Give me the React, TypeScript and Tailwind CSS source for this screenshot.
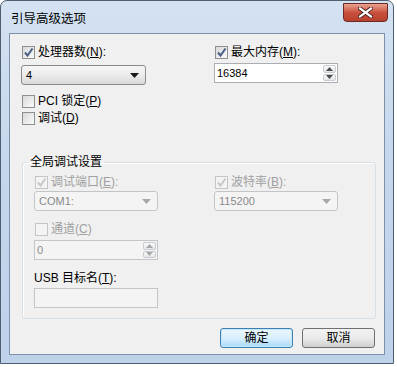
import React from "react";

function Check({ checked, disabled }: { checked?: boolean; disabled?: boolean }) {
  return (
    <span
      className={`flex h-[13px] w-[13px] shrink-0 items-center justify-center border ${
        disabled ? "border-[#c3c6c9] bg-[#f4f4f4]" : "border-[#8e8f8f] bg-gradient-to-br from-[#d8d8d8] to-[#fbfbfb]"
      }`}
    >
      {checked && (
        <svg width="11" height="11" viewBox="0 0 11 11">
          <path
            d="M2 5.5 L4.5 8.5 L9.5 1.5"
            fill="none"
            stroke={disabled ? "#c8c8c8" : "#4a5f85"}
            strokeWidth="2"
          />
        </svg>
      )}
    </span>
  );
}

function CheckRow({
  checked,
  disabled,
  children,
}: {
  checked?: boolean;
  disabled?: boolean;
  children: React.ReactNode;
}) {
  return (
    <div className={`flex h-[13px] items-center gap-[3px] pl-[1px] ${disabled ? "text-[#a0a0a0]" : "text-black"}`}>
      <Check checked={checked} disabled={disabled} />
      <span className="leading-[13px] whitespace-nowrap">{children}</span>
    </div>
  );
}

function Combo({ value, disabled, width }: { value: string; disabled?: boolean; width: string }) {
  return (
    <div
      className={`flex h-[20px] ${width} items-center justify-between rounded-[3px] border pl-[4px] pr-[6px] text-[11px] ${
        disabled
          ? "border-[#c3c6c9] bg-[#f4f4f4] text-[#8a8a8a]"
          : "border-[#8b8b8b] bg-gradient-to-b from-[#f6f6f6] via-[#ececec] to-[#d9d9d9] text-black"
      }`}
    >
      <span>{value}</span>
      <svg width="9" height="5" viewBox="0 0 9 5">
        <path d="M0 0 H9 L4.5 5 Z" fill={disabled ? "#a8a8a8" : "#1a1a1a"} />
      </svg>
    </div>
  );
}

function Spin({ value, disabled }: { value: string; disabled?: boolean }) {
  const arrow = disabled ? "#a8a8a8" : "#4d4d4d";
  return (
    <div
      className={`flex h-[20px] w-[124px] items-stretch border ${
        disabled ? "border-[#c3c6c9] bg-[#f4f4f4] text-[#8a8a8a]" : "border-[#abadb3] bg-white text-black"
      }`}
    >
      <span className="flex flex-1 items-center pl-[2px] text-[11px]">{value}</span>
      <div className="flex w-[15px] flex-col gap-[1px] p-[1px]">
        <div className="flex flex-1 items-center justify-center rounded-[2px] border border-[#c8ccd2] bg-gradient-to-b from-[#fafafa] to-[#e4e6e9]">
          <svg width="7" height="4" viewBox="0 0 7 4">
            <path d="M0 4 L3.5 0 L7 4 Z" fill={arrow} />
          </svg>
        </div>
        <div className="flex flex-1 items-center justify-center rounded-[2px] border border-[#c8ccd2] bg-gradient-to-b from-[#fafafa] to-[#e4e6e9]">
          <svg width="7" height="4" viewBox="0 0 7 4">
            <path d="M0 0 L7 0 L3.5 4 Z" fill={arrow} />
          </svg>
        </div>
      </div>
    </div>
  );
}

export default function App() {
  return (
    <div className="h-[367px] w-[397px] overflow-hidden bg-white font-['Liberation_Sans','Noto_Sans_CJK_SC',sans-serif] text-[12px]">
      <div className="flex h-[364px] w-[394px] flex-col rounded-t-[7px] border border-[#4f5d6e] bg-gradient-to-b from-[#d4e2f2] via-[#c3d6ec] to-[#bed2ea]">
        {/* Title bar */}
        <div className="flex h-[32px] shrink-0 items-start pl-[10px] pr-[5px]">
          <span className="pt-[11px] text-[12.5px] leading-[14px] text-black">引导高级选项</span>
          <div className="ml-auto mt-[2px] flex h-[19px] w-[45px] items-center justify-center rounded-b-[4px] border border-[#6b2a23] bg-gradient-to-b from-[#e8a291] via-[#c9503d] to-[#b8412e]">
            <svg width="15" height="11" viewBox="0 0 15 11">
              <path d="M2 1.5 L13 9.5 M13 1.5 L2 9.5" stroke="#3a1a14" strokeWidth="4" strokeLinecap="square" />
              <path d="M2 1.5 L13 9.5 M13 1.5 L2 9.5" stroke="#ffffff" strokeWidth="2.2" strokeLinecap="square" />
            </svg>
          </div>
        </div>

        {/* Client area */}
        <div className="mx-[8px] h-[322px] border border-[#7d91aa] bg-[#f0f0f0] pl-[11px] pr-[9px] pt-[12px]">
          <div className="grid grid-cols-[193px_1fr]">
            <div className="flex flex-col">
              <CheckRow checked>
                处理器数(<u>N</u>):
              </CheckRow>
              <div className="mt-[6px]">
                <Combo value="4" width="w-[125px]" />
              </div>
              <div className="mt-[10px]">
                <CheckRow>
                  PCI 锁定(<u>P</u>)
                </CheckRow>
              </div>
              <div className="mt-[4px]">
                <CheckRow>
                  调试(<u>D</u>)
                </CheckRow>
              </div>
            </div>
            <div className="flex flex-col">
              <CheckRow checked>
                最大内存(<u>M</u>):
              </CheckRow>
              <div className="mt-[4px]">
                <Spin value="16384" />
              </div>
            </div>
          </div>

          {/* Group box */}
          <fieldset className="ml-[1px] mt-[30px] h-[164px] w-[354px] rounded-[3px] border border-[#d5dfe5] px-[11px] shadow-[inset_1px_1px_0_#ffffff]">
            <legend className="-ml-[6px] px-[2px] text-[12px] leading-[14px] text-black">全局调试设置</legend>
            <div className="mt-[7px] grid grid-cols-[180px_1fr]">
              <div className="flex flex-col">
                <CheckRow checked disabled>
                  调试端口(<u>E</u>):
                </CheckRow>
                <div className="mt-[2px]">
                  <Combo value="COM1:" disabled width="w-[124px]" />
                </div>
                <div className="mt-[12px]">
                  <CheckRow disabled>
                    通道(<u>C</u>)
                  </CheckRow>
                </div>
                <div className="mt-[4px]">
                  <Spin value="0" disabled />
                </div>
                <div className="mt-[11px] h-[14px] leading-[14px] text-black">
                  USB 目标名(<u>T</u>):
                </div>
                <div className="mt-[3px] h-[20px] w-[124px] border border-[#c3c6c9] bg-[#f4f4f4]" />
              </div>
              <div className="flex flex-col">
                <CheckRow checked disabled>
                  波特率(<u>B</u>):
                </CheckRow>
                <div className="mt-[2px]">
                  <Combo value="115200" disabled width="w-[124px]" />
                </div>
              </div>
            </div>
          </fieldset>

          {/* Buttons */}
          <div className="mt-[9px] flex justify-end gap-[9px]">
            <div className="flex h-[20px] w-[73px] items-center justify-center rounded-[3px] border border-[#3c7fb1] bg-gradient-to-b from-[#eaf6fd] via-[#d9f0fc] to-[#a7d9f5] shadow-[inset_0_0_0_1px_#c5e8fb]">
              确定
            </div>
            <div className="flex h-[20px] w-[73px] items-center justify-center rounded-[3px] border border-[#707070] bg-gradient-to-b from-[#f2f2f2] via-[#ebebeb] to-[#cfcfcf]">
              取消
            </div>
          </div>
        </div>
      </div>
    </div>
  );
}
